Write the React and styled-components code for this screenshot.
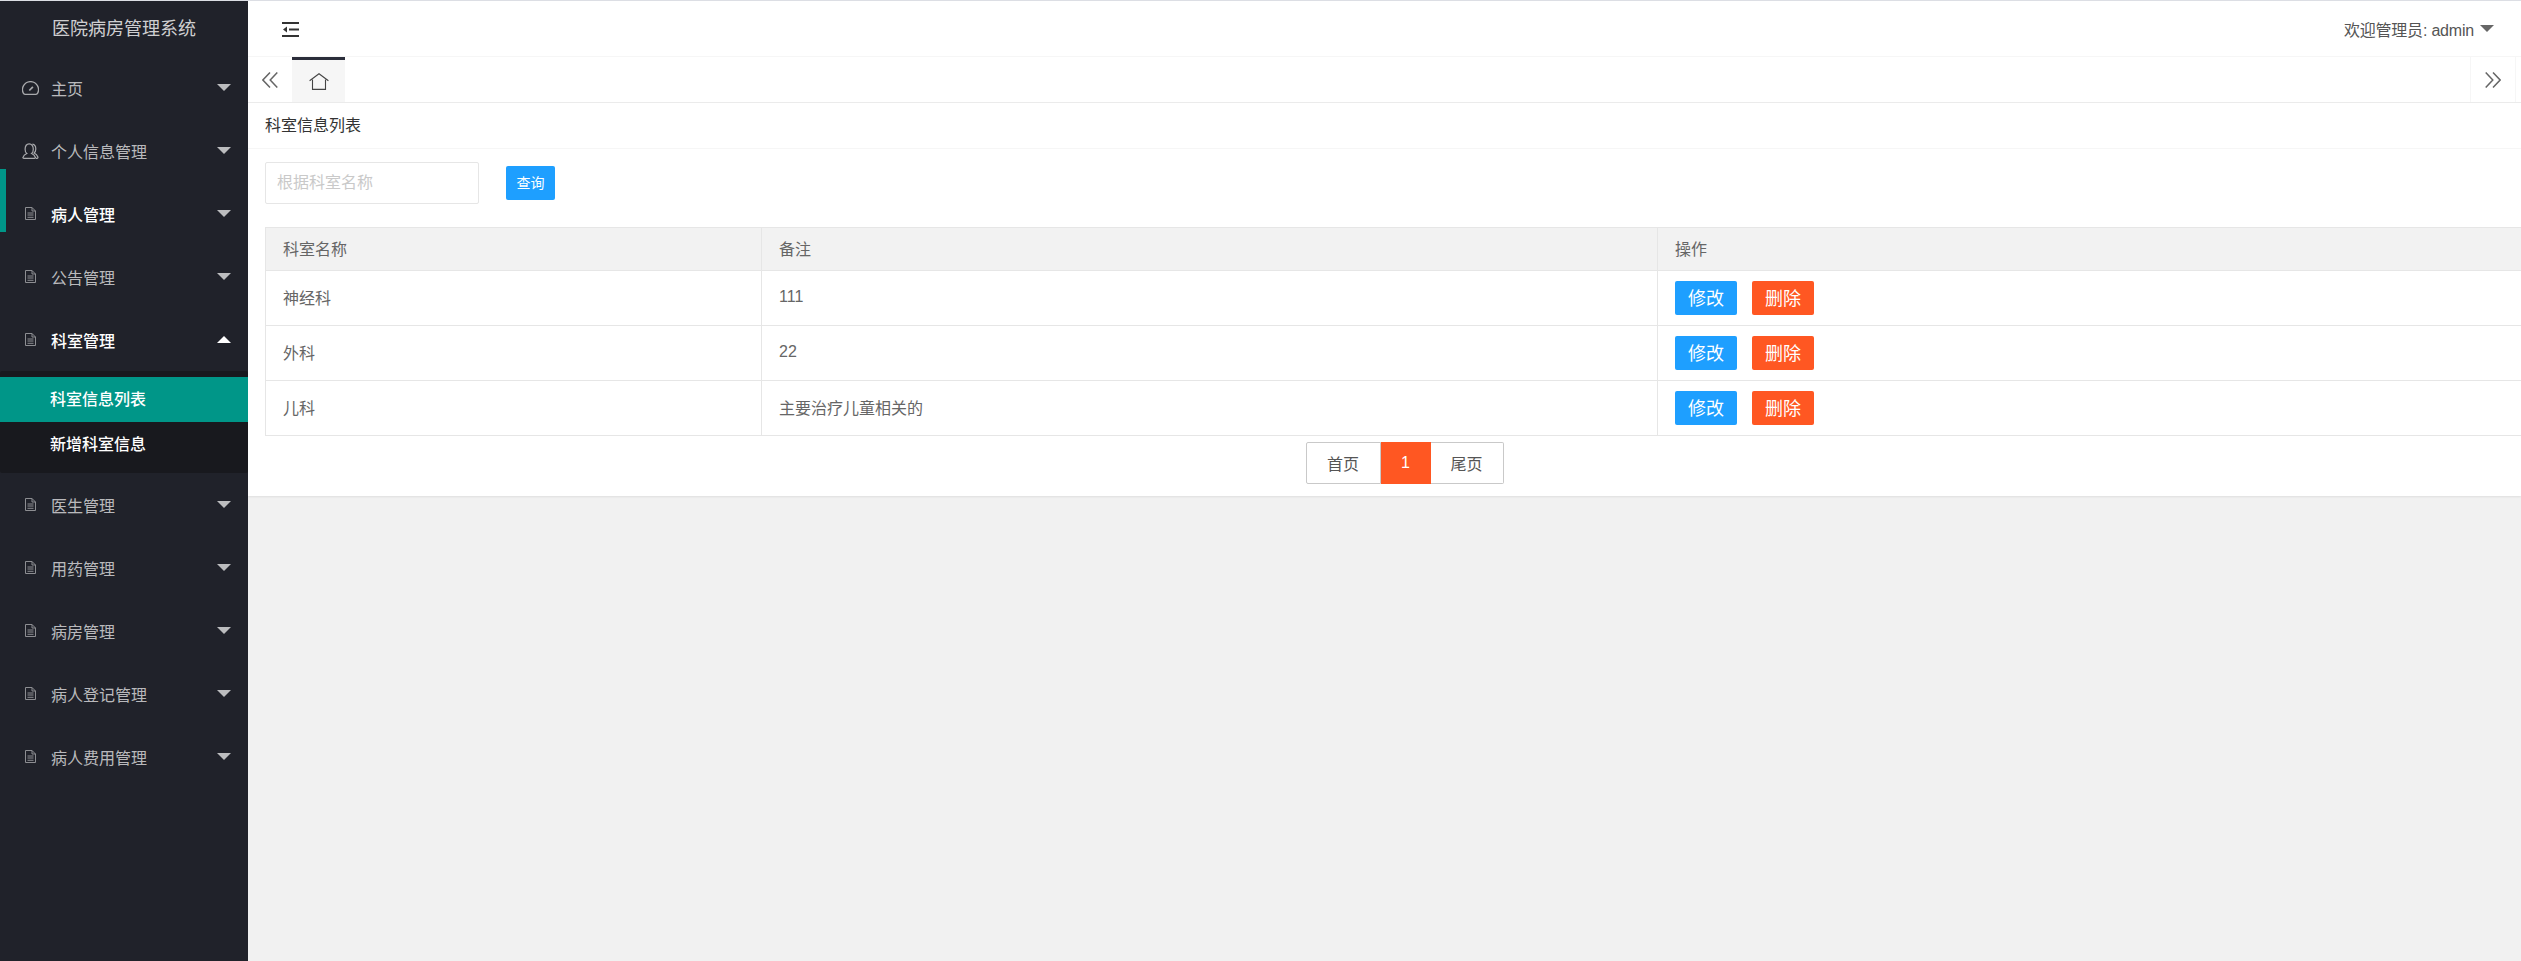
import styled, { createGlobalStyle } from 'styled-components';

const GlobalStyle = createGlobalStyle`
	html, body {
		margin: 0;
		padding: 0;
		background: #f1f1f1;
		overflow: hidden;
	}
	* {
		box-sizing: border-box;
	}
	body {
		font-family: "Liberation Sans", "Noto Sans CJK SC", sans-serif;
		font-size: 16px;
		color: #666;
	}
`;

const Page = styled.div`
	display: flex;
	width: 2521px;
	height: 961px;
	border-top: 1px solid #dcdee4;
	overflow: hidden;
`;

const Sidebar = styled.aside`
	position: relative;
	flex: 0 0 248px;
	background: #20222a;
`;

const Logo = styled.div`
	height: 55px;
	line-height: 56px;
	padding-left: 52px;
	font-size: 18px;
	color: rgba(255, 255, 255, 0.8);
`;

const ActiveBar = styled.div`
	position: absolute;
	left: 0;
	top: 168px;
	width: 6px;
	height: 63px;
	background: #009688;
`;

const MenuItem = styled.div`
	display: flex;
	align-items: center;
	height: 63px;
	color: ${(p) => (p.$active ? '#fff' : 'rgba(255, 255, 255, 0.7)')};
	font-weight: ${(p) => (p.$active ? 500 : 400)};
`;

const MenuIcon = styled.span`
	flex: 0 0 51px;
	display: flex;
	justify-content: center;
	padding-left: 9px;
	svg {
		display: block;
	}
`;

const MenuLabel = styled.span`
	flex: 1;
`;

const Caret = styled.span`
	width: 0;
	height: 0;
	margin-right: ${(p) => p.$right ?? 17}px;
	border-left: 7px solid transparent;
	border-right: 7px solid transparent;
	border-top: ${(p) => (p.$up ? '0' : `7px solid ${p.$color || 'rgba(255,255,255,0.7)'}`)};
	border-bottom: ${(p) => (p.$up ? `7px solid ${p.$color || '#fff'}` : '0')};
`;

const SubMenu = styled.div`
	padding: 6px 0;
	background: #18191e;
	border-radius: 2px;
`;

const SubItem = styled.div`
	height: 45px;
	line-height: 45px;
	padding-left: 50px;
	color: #fff;
	font-weight: 500;
	background: ${(p) => (p.$selected ? '#009688' : 'transparent')};
`;

const Main = styled.main`
	flex: 1;
	min-width: 0;
	display: flex;
	flex-direction: column;
`;

const Header = styled.header`
	display: flex;
	align-items: center;
	justify-content: space-between;
	height: 55px;
	padding: 0 27px 0 34px;
	background: #fff;
`;

const MenuToggle = styled.span`
	display: flex;
	margin-top: 2px;
`;

const UserInfo = styled.div`
	display: flex;
	align-items: center;
	gap: 6px;
	color: #555;
	letter-spacing: -0.2px;
`;

const TabBar = styled.div`
	display: flex;
	align-items: stretch;
	height: 47px;
	background: #fff;
	border-top: 1px solid #f6f6f6;
	border-bottom: 1px solid #ececec;
`;

const TabArrow = styled.div`
	flex: 0 0 ${(p) => p.$width}px;
	display: flex;
	align-items: center;
	justify-content: center;
	border-left: ${(p) => (p.$divided ? '1px solid #f6f6f6' : '0')};
	border-right: ${(p) => (p.$divided ? '1px solid #f6f6f6' : '0')};
`;

const HomeTab = styled.div`
	flex: 0 0 53px;
	display: flex;
	align-items: center;
	justify-content: center;
	background: #f6f6f6;
	border-top: 3px solid #2b2d3a;
`;

const TabSpacer = styled.div`
	flex: 1;
`;

const TabEnd = styled.div`
	flex: 0 0 5px;
`;

const Card = styled.section`
	background: #fff;
	box-shadow: 0 1px 2px rgba(0, 0, 0, 0.08);
	overflow: hidden;
	padding-bottom: 12px;
`;

const CardTitle = styled.div`
	height: 46px;
	line-height: 45px;
	padding-left: 17px;
	color: #333;
	border-bottom: 1px solid #f6f6f6;
`;

const CardBody = styled.div`
	width: 2296px;
	padding: 13px 0 0 17px;
`;

const SearchRow = styled.div`
	display: flex;
	align-items: center;
	gap: 27px;
	margin-bottom: 23px;
`;

const SearchInput = styled.input`
	width: 214px;
	height: 42px;
	padding: 0 11px;
	font: inherit;
	color: #666;
	background: #fff;
	border: 1px solid #e6e6e6;
	border-radius: 2px;
	outline: none;
	&::placeholder {
		color: #c9c9c9;
		opacity: 1;
	}
`;

const ActionButton = styled.button`
	width: ${(p) => p.$width || 62}px;
	height: 34px;
	padding: 0 0 2px;
	border: 0;
	border-radius: 2px;
	font-family: inherit;
	font-size: ${(p) => p.$size || 18}px;
	color: #fff;
	background: ${(p) => (p.$danger ? '#ff5722' : '#1e9fff')};
`;

const Table = styled.div`
	border-top: 1px solid #e6e6e6;
	border-left: 1px solid #e6e6e6;
`;

const Row = styled.div`
	display: grid;
	grid-template-columns: 496px 896px 1fr;
	height: ${(p) => (p.$head ? 43 : 55)}px;
	background: ${(p) => (p.$head ? '#f2f2f2' : '#fff')};
	border-bottom: 1px solid #e6e6e6;
`;

const Cell = styled.div`
	display: flex;
	align-items: center;
	padding: 0 0 2px 17px;
	border-right: ${(p) => (p.$last ? '0' : '1px solid #e6e6e6')};
`;

const ButtonCell = styled(Cell)`
	gap: 15px;
	padding-bottom: 0;
`;

const Pagination = styled.div`
	display: flex;
	justify-content: center;
	margin-top: 6px;
`;

const PageLink = styled.div`
	display: flex;
	align-items: center;
	justify-content: center;
	width: ${(p) => p.$width}px;
	height: 42px;
	color: #555;
	background: #fff;
	border: 1px solid #c9c9c9;
	border-left-width: ${(p) => (p.$side === 'right' ? 0 : 1)}px;
	border-radius: ${(p) => (p.$side === 'left' ? '2px 0 0 2px' : '0 2px 2px 0')};
`;

const PageCurrent = styled.div`
	display: flex;
	align-items: center;
	justify-content: center;
	width: 50px;
	height: 42px;
	color: #fff;
	background: #ff5722;
`;

const GaugeIcon = () => (
	<svg width="17" height="14" viewBox="0 0 17 14" fill="none" stroke="#a9aaad" strokeWidth="1.3">
		<path d="M3 13.300H14c.9 0 1.400-.4 1.700-1.200A8 8 0 1 0 1.300 12.100c.3.8.8 1.200 1.700 1.200z" />
		<path d="M7.300 9.500l3.600-3.700" strokeWidth="1.700" />
	</svg>
);

const UserIcon = () => (
	<svg width="17" height="16" viewBox="0 0 17 16" fill="none" stroke="#a9aaad" strokeWidth="1.200">
		<path d="M1.900 15.300h10.600c.7 0 1.100-.4.9-1-.5-1.800-2-3.100-3.800-3.800 1.100-.9 1.700-2.400 1.700-4.300C11.300 3.100 9.700.8 7.200.8S3.100 3.100 3.100 6.200c0 1.900.6 3.400 1.700 4.300-1.800.7-3.300 2-3.800 3.800-.2.6.2 1 .9 1z" />
		<path d="M10.400 1.100c2.100.3 3.400 2.200 3.400 4.800 0 1.800-.6 3.200-1.700 4.100 1.700.8 3.100 2.100 3.800 4 .2.700-.1 1.300-.9 1.300h-1" />
	</svg>
);

const DocIcon = () => (
	<svg width="11" height="13" viewBox="0 0 11 13" fill="none" stroke="#8d8e92" strokeWidth="1">
		<path d="M.5.500h6.500l3.500 3.500v8.500H.5z" />
		<path d="M2.500 6h6M2.500 8h6M2.500 10.300h6M7 .5v3.500h3.500" />
	</svg>
);

const ShrinkIcon = () => (
	<svg width="17" height="15" viewBox="0 0 17 15" fill="#333">
		<rect x="0" y="0" width="17" height="2" />
		<rect x="0" y="13" width="17" height="2" />
		<rect x="7" y="6.500" width="10" height="2" />
		<path d="M5 4.500v6l-4-3z" />
	</svg>
);

const HomeIcon = () => (
	<svg width="20" height="17" viewBox="0 0 20 17" fill="none" stroke="#444" strokeWidth="1.100">
		<path d="M.6 7.800L10 .8l9.400 7" />
		<path d="M3.500 6.500v9.900h13V6.500" />
	</svg>
);

const DoubleChevron = ({ right }) => (
	<svg width="16" height="16" viewBox="0 0 16 16" fill="none" stroke="#666" strokeWidth="1.500" style={{ transform: right ? 'scaleX(-1)' : 'none' }}>
		<path d="M8 .5L.9 8 8 15.500M15.300.5L8.200 8l7.100 7.500" />
	</svg>
);

const menuTop = [
	{ label: '主页', icon: <GaugeIcon /> },
	{ label: '个人信息管理', icon: <UserIcon /> },
	{ label: '病人管理', icon: <DocIcon />, active: true },
	{ label: '公告管理', icon: <DocIcon /> },
];

const menuBottom = ['医生管理', '用药管理', '病房管理', '病人登记管理', '病人费用管理'];

const departments = [
	{ name: '神经科', note: '111' },
	{ name: '外科', note: '22' },
	{ name: '儿科', note: '主要治疗儿童相关的' },
];

const App = () => {
	return (
		<>
			<GlobalStyle />
			<Page>
				<Sidebar>
					<Logo>医院病房管理系统</Logo>
					<ActiveBar />
					{menuTop.map((item) => (
						<MenuItem key={item.label} $active={item.active}>
							<MenuIcon>{item.icon}</MenuIcon>
							<MenuLabel>{item.label}</MenuLabel>
							<Caret />
						</MenuItem>
					))}
					<MenuItem $active>
						<MenuIcon><DocIcon /></MenuIcon>
						<MenuLabel>科室管理</MenuLabel>
						<Caret $up />
					</MenuItem>
					<SubMenu>
						<SubItem $selected>科室信息列表</SubItem>
						<SubItem>新增科室信息</SubItem>
					</SubMenu>
					{menuBottom.map((label) => (
						<MenuItem key={label}>
							<MenuIcon><DocIcon /></MenuIcon>
							<MenuLabel>{label}</MenuLabel>
							<Caret />
						</MenuItem>
					))}
				</Sidebar>
				<Main>
					<Header>
						<MenuToggle><ShrinkIcon /></MenuToggle>
						<UserInfo>
							<span>欢迎管理员: admin</span>
							<Caret $right={0} $color="#666" />
						</UserInfo>
					</Header>
					<TabBar>
						<TabArrow $width={44}><DoubleChevron /></TabArrow>
						<HomeTab><HomeIcon /></HomeTab>
						<TabSpacer />
						<TabArrow $width={46} $divided><DoubleChevron right /></TabArrow>
						<TabEnd />
					</TabBar>
					<Card>
						<CardTitle>科室信息列表</CardTitle>
						<CardBody>
							<SearchRow>
								<SearchInput placeholder="根据科室名称" />
								<ActionButton $width={49} $size={14}>查询</ActionButton>
							</SearchRow>
							<Table>
								<Row $head>
									<Cell>科室名称</Cell>
									<Cell>备注</Cell>
									<Cell $last>操作</Cell>
								</Row>
								{departments.map((dept) => (
									<Row key={dept.name}>
										<Cell>{dept.name}</Cell>
										<Cell>{dept.note}</Cell>
										<ButtonCell $last>
											<ActionButton>修改</ActionButton>
											<ActionButton $danger>删除</ActionButton>
										</ButtonCell>
									</Row>
								))}
							</Table>
							<Pagination>
								<PageLink $width={75} $side="left">首页</PageLink>
								<PageCurrent>1</PageCurrent>
								<PageLink $width={73} $side="right">尾页</PageLink>
							</Pagination>
						</CardBody>
					</Card>
				</Main>
			</Page>
		</>
	);
};

export default App;
